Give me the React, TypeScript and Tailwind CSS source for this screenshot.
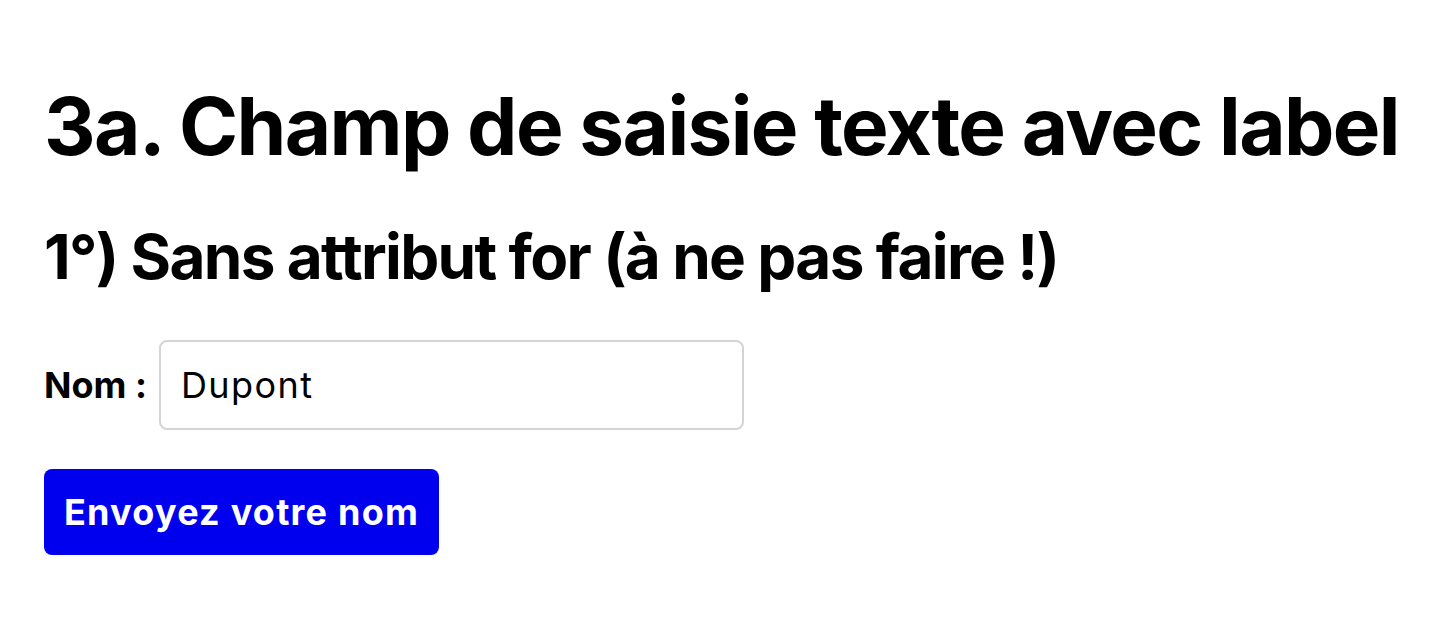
import React from "react";

export default function App() {
  return (
    <div className="min-h-[632px] bg-white px-[44px] pt-[86px] font-['Inter','Noto_Sans',sans-serif] text-black">
      <h1 className="text-[80px] font-bold leading-none tracking-[-0.02em] whitespace-nowrap">
        3a. Champ de saisie texte avec label
      </h1>
      <h2 className="mt-[60px] text-[62px] font-bold leading-none tracking-[-0.027em] whitespace-nowrap">
        1°) Sans attribut for (à ne pas faire !)
      </h2>
      <div className="mt-[52px] flex items-center gap-[12px]">
        <span className="text-[36px] font-bold leading-none">Nom :</span>
        <input
          type="text"
          defaultValue="Dupont"
          className="h-[90px] w-[585px] rounded-[8px] border-2 border-[#d4d4d4] px-[20px] text-[36px] tracking-[0.04em] text-black outline-none font-['Inter',sans-serif]"
        />
      </div>
      <button className="mt-[39px] h-[86px] w-[395px] rounded-[8px] bg-[#0000ee] text-[36px] font-bold leading-none tracking-[0.034em] text-white">
        Envoyez votre nom
      </button>
    </div>
  );
}
